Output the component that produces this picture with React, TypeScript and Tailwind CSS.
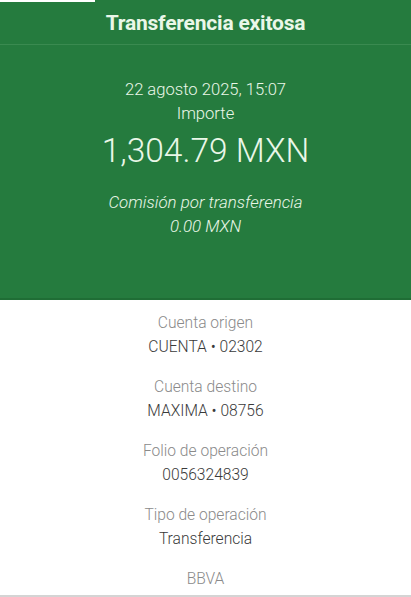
const details = [
  { label: 'Cuenta origen', value: 'CUENTA • 02302' },
  { label: 'Cuenta destino', value: 'MAXIMA • 08756' },
  { label: 'Folio de operación', value: '0056324839' },
  { label: 'Tipo de operación', value: 'Transferencia' },
];

export default function App() {
  return (
    <div
      className="w-[411px] h-[597px] bg-white overflow-hidden flex flex-col"
      style={{ fontFamily: 'Roboto, "Noto Sans", sans-serif' }}
    >
      {/* Green header */}
      <div className="relative bg-[#257b3e] h-[300px] border-b-2 border-[#1f6d35] text-[#eaf7e8] flex flex-col">
        <div className="absolute top-0 left-0 w-[95px] h-[2px] bg-white" />
        <div className="h-[45px] flex items-center justify-center border-b border-[#3a8a50] pt-[3px]">
          <h1 className="text-[21px] font-bold tracking-[-0.2px]">Transferencia exitosa</h1>
        </div>
        <div className="flex flex-col items-center pt-[33px]">
          <p className="text-[16.6px] leading-[24px] font-light">22 agosto 2025, 15:07</p>
          <p className="text-[16.6px] leading-[24px] font-light">Importe</p>
          <p className="text-[33.5px] leading-[48px] font-light mt-[1px]">1,304.79 MXN</p>
          <p className="text-[16.9px] leading-[24px] font-light italic mt-[15px]">Comisión por transferencia</p>
          <p className="text-[16.9px] leading-[24px] font-light italic">0.00 MXN</p>
        </div>
      </div>

      {/* Details */}
      <div className="flex-1 flex flex-col items-center pt-[11px] border-b-2 border-[#d4d4d4]">
        {details.map((d) => (
          <div key={d.label} className="flex flex-col items-center h-[64px]">
            <p className="text-[15.6px] leading-[24px] text-[#8a8a8a] font-light">{d.label}</p>
            <p className="text-[15.6px] leading-[24px] text-[#3a3a3a] font-light">{d.value}</p>
          </div>
        ))}
        <p className="text-[15.6px] leading-[24px] text-[#8a8a8a] font-light">BBVA</p>
      </div>
    </div>
  );
}
